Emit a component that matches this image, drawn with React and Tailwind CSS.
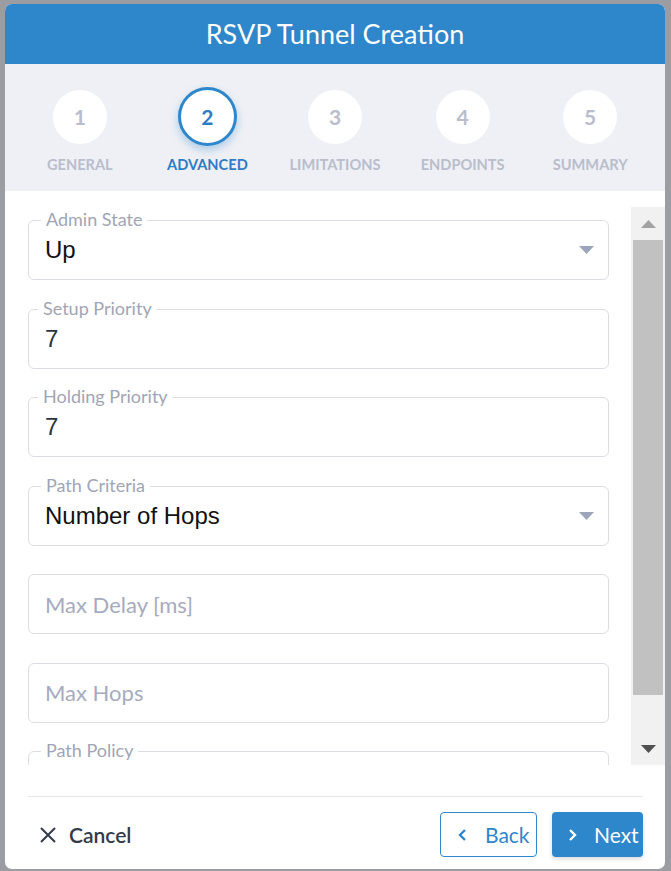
import React from "react";

const SANS = "font-['Lato','Noto_Sans',sans-serif]";

function Field({ label, value, placeholder, select, valueClass, labelLeft = "left-[12px]" }) {
  return (
    <div className="relative h-[60px] shrink-0 rounded-[6px] border border-[#dcdde4] flex items-center pl-[16px] pr-[14px]">
      {label && (
        <span className={`absolute ${labelLeft} top-[-12px] bg-white px-[5px] text-[18px] leading-[20px] text-[#a0a5b6] ${SANS}`}>
          {label}
        </span>
      )}
      <div className="flex-1 min-w-0">
        {value ? (
          <span className={valueClass}>{value}</span>
        ) : (
          <span className={`text-[22px] text-[#a6abbd] ${SANS}`}>{placeholder}</span>
        )}
      </div>
      {select && (
        <svg width="15" height="8" viewBox="0 0 15 8">
          <path d="M0 0 L15 0 L7.5 8 Z" fill="#9ca5ba" />
        </svg>
      )}
    </div>
  );
}

function Step({ n, label, active }) {
  return (
    <div className="flex flex-col items-center">
      <div className="h-[59px] flex items-center justify-center">
        {active ? (
          <div className="w-[59px] h-[59px] rounded-full bg-white border-[3px] border-[#2e86cb] shadow-[0_4px_8px_rgba(46,134,203,0.35)] flex items-center justify-center">
            <span className={`text-[21px] font-bold text-[#2e7cc4] ${SANS}`}>{n}</span>
          </div>
        ) : (
          <div className="w-[54px] h-[54px] rounded-full bg-white flex items-center justify-center">
            <span className={`text-[21px] font-bold text-[#b9bdcc] ${SANS}`}>{n}</span>
          </div>
        )}
      </div>
      <div className={`mt-[10px] text-[14.6px] leading-[18px] font-bold uppercase ${active ? "text-[#2e7cc4]" : "text-[#b9bdcc]"} ${SANS}`}>
        {label}
      </div>
    </div>
  );
}

export default function App() {
  const arial = "font-['Liberation_Sans',Arial,sans-serif] text-[24px]";
  return (
    <div className="w-[671px] h-[871px] bg-[#9c9da2] pt-[4px] pl-[5px] overflow-hidden">
      <div className="w-[660px] h-[865px] bg-white rounded-[7px] overflow-hidden flex flex-col">
        <div className="h-[60px] shrink-0 bg-[#2e86cb] flex items-center justify-center">
          <span className={`text-white text-[27px] ${SANS}`}>RSVP Tunnel Creation</span>
        </div>
        <div className="h-[127px] shrink-0 bg-[#eff0f5] grid grid-cols-5 px-[11px] pt-[23px]">
          <Step n="1" label="General" />
          <Step n="2" label="Advanced" active />
          <Step n="3" label="Limitations" />
          <Step n="4" label="Endpoints" />
          <Step n="5" label="Summary" />
        </div>
        <div className="mt-[16px] h-[558px] shrink-0 flex">
          <div className="flex-1 overflow-hidden pl-[23px] pr-[22px] pt-[13px] flex flex-col gap-[28.5px]">
            <Field label="Admin State" value="Up" select valueClass={`${arial} text-[#111]`} />
            <Field label="Setup Priority" labelLeft="left-[9px]" value="7" valueClass={`${arial} text-[#2d3340]`} />
            <Field label="Holding Priority" labelLeft="left-[9px]" value="7" valueClass={`${arial} text-[#2d3340]`} />
            <Field label="Path Criteria" value="Number of Hops" select valueClass={`${arial} text-[#111]`} />
            <Field placeholder="Max Delay [ms]" />
            <Field placeholder="Max Hops" />
            <Field label="Path Policy" value=" " valueClass="" />
          </div>
          <div className="w-[34px] shrink-0 bg-[#f1f1f1] flex flex-col">
            <div className="h-[33px] flex items-center justify-center">
              <svg width="15" height="8" viewBox="0 0 15 8">
                <path d="M0 8 L15 8 L7.5 0 Z" fill="#a3a3a3" />
              </svg>
            </div>
            <div className="h-[455px] mx-[2px] bg-[#c1c1c1]" />
            <div className="flex-1 flex items-end justify-center pb-[12px]">
              <svg width="15" height="8" viewBox="0 0 15 8">
                <path d="M0 0 L15 0 L7.5 8 Z" fill="#505050" />
              </svg>
            </div>
          </div>
        </div>
        <div className="mt-[31px] ml-[23px] mr-[22px] h-px bg-[#e6e7eb]" />
        <div className="mt-[15px] ml-[23px] mr-[22px] h-[45px] flex items-center">
          <button className="flex items-center gap-[13px] pl-[12px] h-full">
            <svg width="16" height="16" viewBox="0 0 16 16">
              <path d="M1 1 L15 15 M15 1 L1 15" stroke="#333a48" strokeWidth="2" />
            </svg>
            <span className={`text-[21px] font-semibold text-[#333a48] ${SANS}`}>Cancel</span>
          </button>
          <div className="flex-1" />
          <button className="w-[97px] h-[45px] rounded-[4px] border border-[#2e86cb] bg-white flex items-center pl-[17px] gap-[18px]">
            <svg width="9" height="12" viewBox="0 0 9 12">
              <path d="M7 1 L2 6 L7 11" stroke="#2e86cb" strokeWidth="2.4" fill="none" />
            </svg>
            <span className={`text-[21px] text-[#2e86cb] ${SANS}`}>Back</span>
          </button>
          <button className="ml-[15px] w-[91px] h-[45px] rounded-[4px] bg-[#2e86cb] shadow-[0_2px_4px_rgba(0,0,0,0.15)] flex items-center pl-[16px] gap-[17px]">
            <svg width="9" height="12" viewBox="0 0 9 12">
              <path d="M2 1 L7 6 L2 11" stroke="#ffffff" strokeWidth="2.4" fill="none" />
            </svg>
            <span className={`text-[21px] text-white ${SANS}`}>Next</span>
          </button>
        </div>
      </div>
    </div>
  );
}
